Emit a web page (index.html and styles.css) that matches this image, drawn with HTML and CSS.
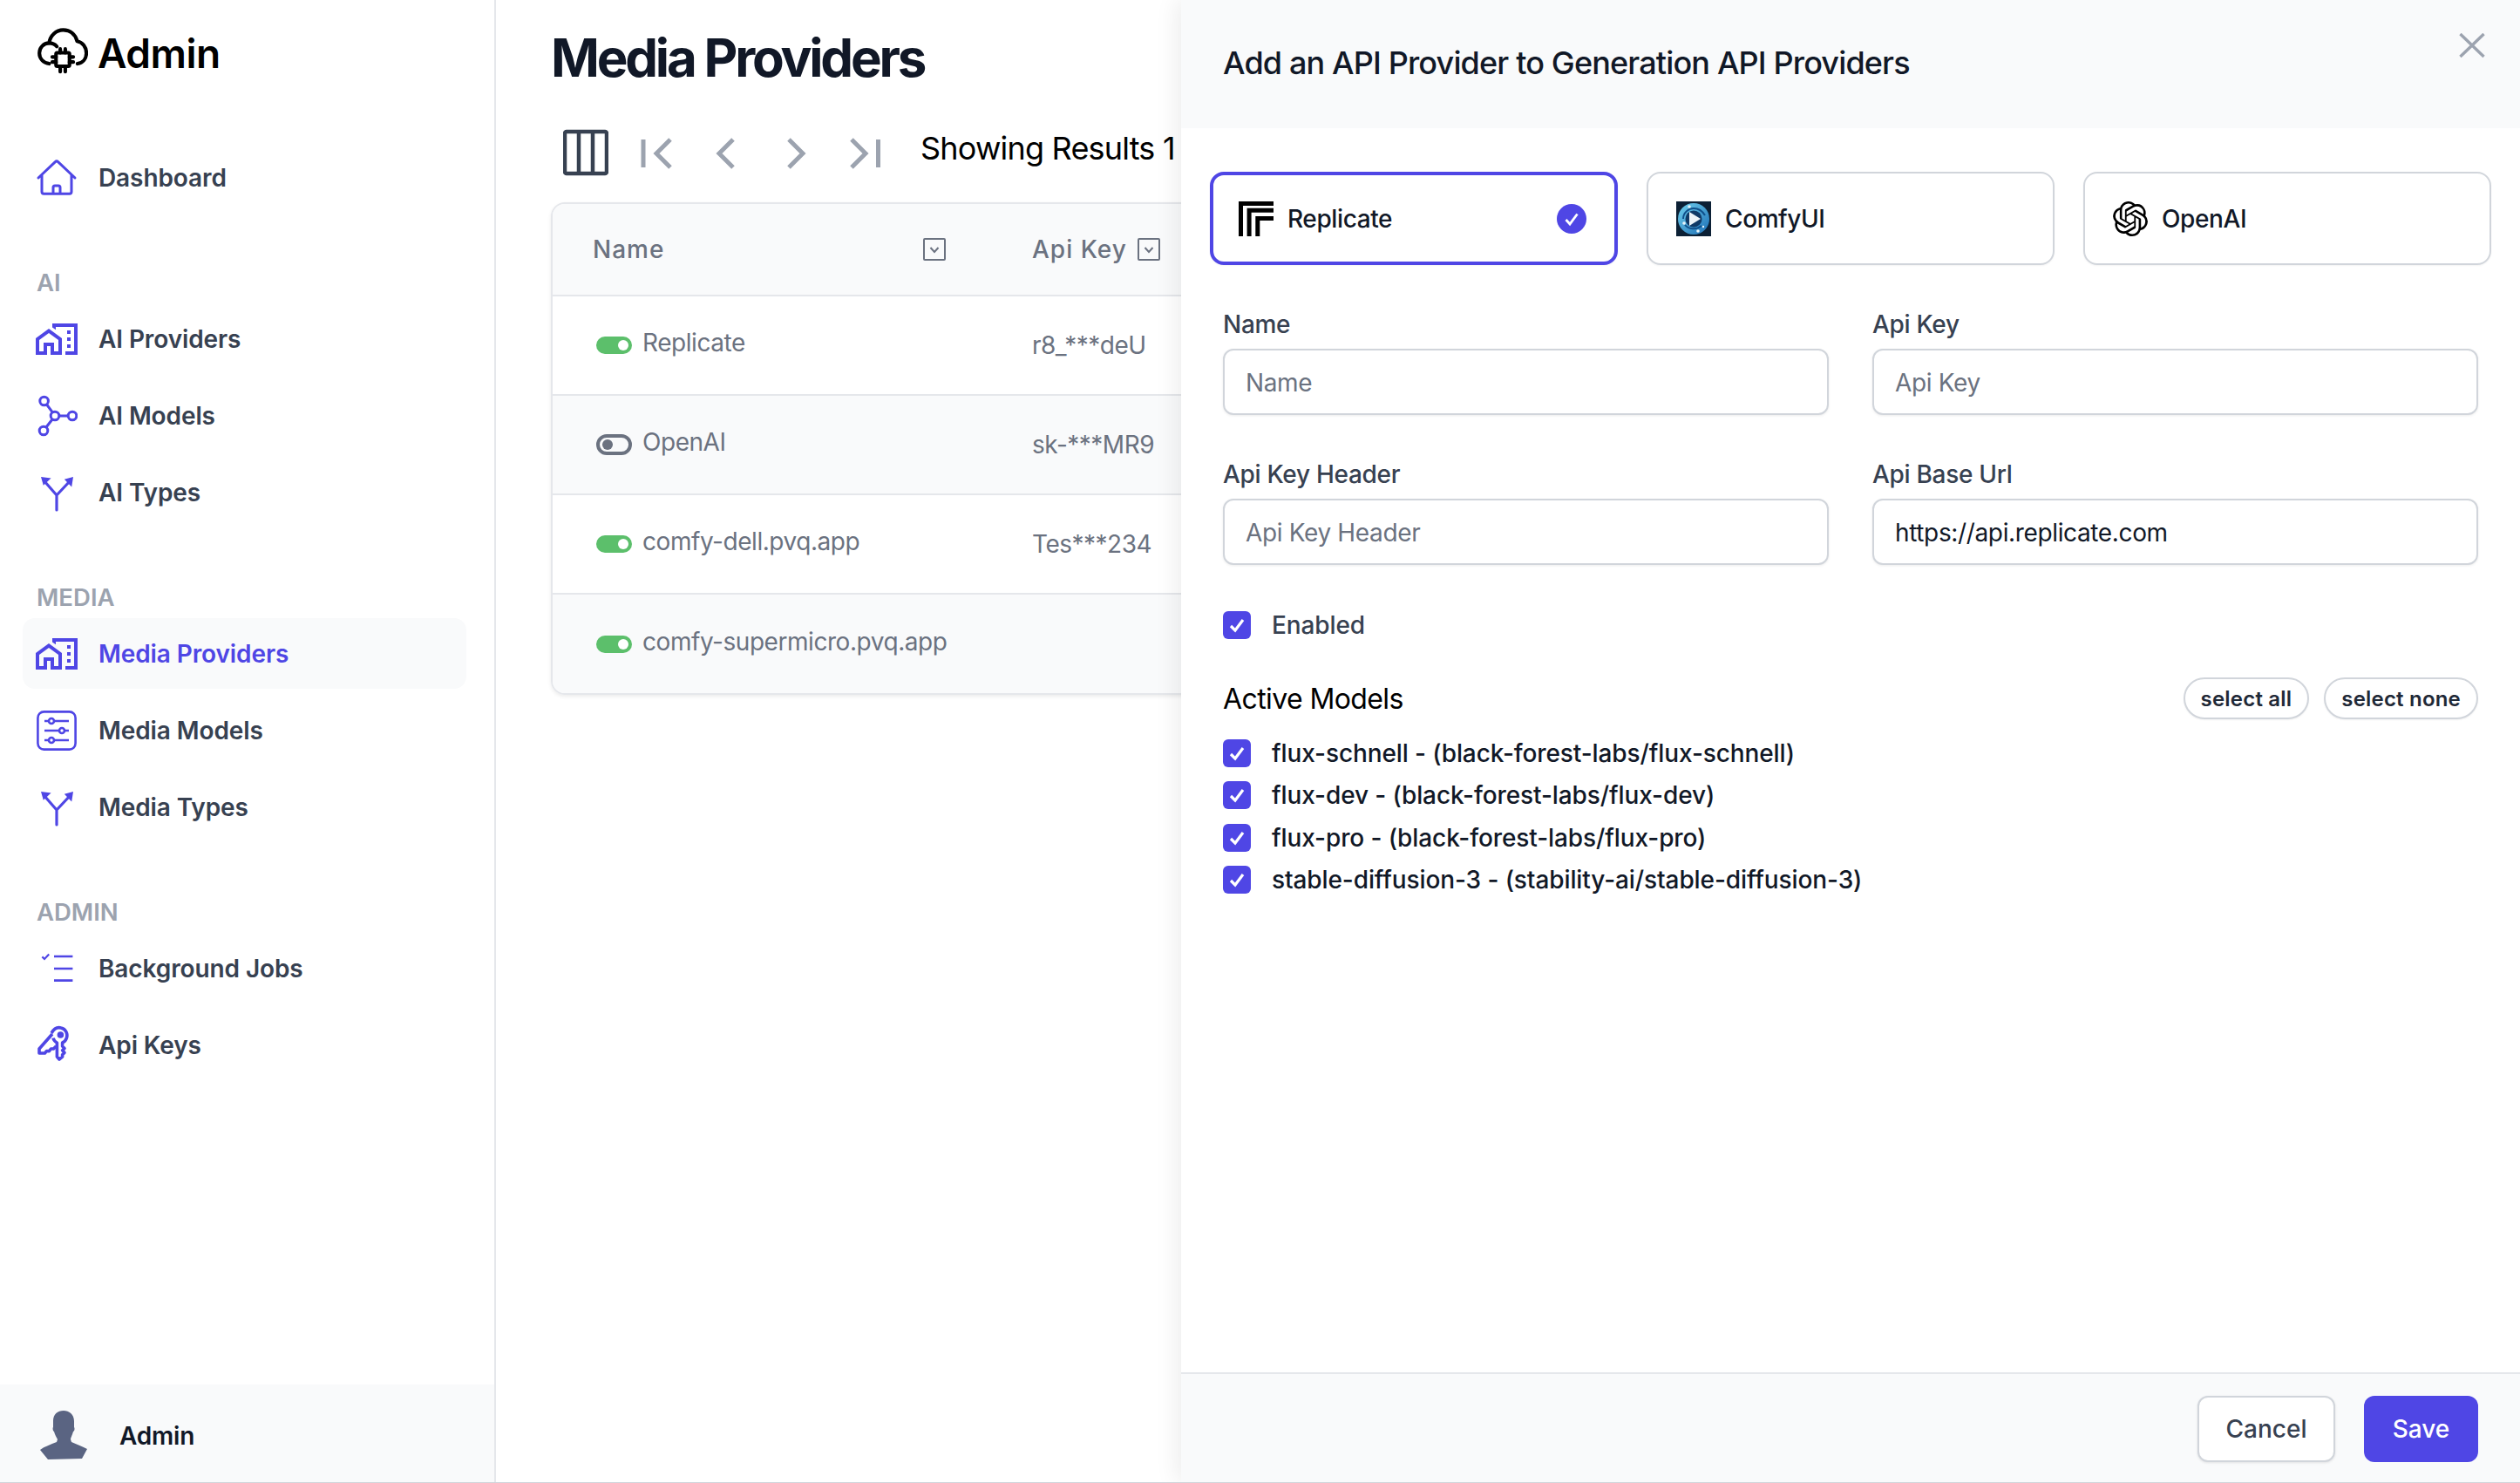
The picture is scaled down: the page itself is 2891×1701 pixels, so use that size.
FILE: index.html
```html
<!DOCTYPE html>
<html lang="en">
<head>
    <meta charset="UTF-8">
    <title>Media Providers</title>
    <link rel="stylesheet" href="styles.css">
</head>
<body>
<div class="app">
    <aside class="sidebar">
        <div class="brand">
            <svg class="brand-logo" viewBox="0 0 24 24" fill="none" stroke="#000" stroke-width="1.7" stroke-linecap="round" stroke-linejoin="round">
                <path d="M5.6 17C2.8 16.6.9 14.6.9 12c0-2.7 2-4.7 4.6-4.8C6 3.6 8.8 1 12.2 1c3.3 0 5.8 2 6.6 5.3 2.7.5 4.4 2.8 4.4 5.7 0 2.6-1.6 4.6-4.2 5"/>
                <path d="M5.5 7.2c1.5 0 2.8.6 3.7 1.6"/>
                <rect x="8.8" y="11.8" width="6.4" height="6.4" rx=".6"/>
                <path d="M10.8 10v1.8M13.2 10v1.8M10.8 18.2v2.6M13.2 18.2v2.6M7 13.8h1.8M7 16.2h1.8M15.2 13.8H17M15.2 16.2H17"/>
            </svg>
            <span class="brand-name">Admin</span>
        </div>

        <nav class="nav">
            <a class="nav-item first">
                <svg class="nav-icon" viewBox="0 0 24 24" fill="none" stroke="currentColor" stroke-width="1.5" stroke-linejoin="round" stroke-linecap="round"><path d="M1.5 12l9.7-9.2c.44-.44 1.16-.44 1.6 0L22.500 12M3.500 10v10c0 .62.5 1.100 1.100 1.100h14.800c.62 0 1.100-.5 1.100-1.100V10M10 21v-3.500c0-.6.4-1 1-1h2c.6 0 1 .4 1 1V21"/></svg>
                Dashboard
            </a>

            <div class="nav-section">
                <div class="nav-label">AI</div>
                <a class="nav-item">
                    <svg class="nav-icon" viewBox="0 0 24 24"><path fill="currentColor" fill-rule="evenodd" d="M9.500 3v2.200l2 1.400V5H22v14h-5v2h7V3H9.500zM18 7h2v2h-2zM18 11h2v2h-2zM18 15h2v2h-2zM0 11.500V21h6.500v-5h2v5H15v-9.500L7.500 6 0 11.500zM13 19h-2.500v-5h-6v5H2v-6.500l5.500-4 5.500 4z"/></svg>
                    AI Providers
                </a>
                <a class="nav-item">
                    <svg class="nav-icon" viewBox="0 0 24 24" fill="none" stroke="currentColor" stroke-width="1.5"><circle cx="4.800" cy="3.500" r="2.400"/><circle cx="11" cy="12" r="2.400"/><circle cx="21" cy="12" r="2.400"/><circle cx="4.500" cy="20.500" r="2.400"/><path d="M6.300 5.500l3.300 4.400M13.500 12h5M9.500 14l-3.500 4.500"/></svg>
                    AI Models
                </a>
                <a class="nav-item">
                    <svg class="nav-icon" viewBox="0 0 24 24" fill="none" stroke="currentColor" stroke-width="1.600" stroke-linecap="round"><path d="M12 22v-8.500L5 5.500M12 13.500l7.500-8"/><path fill="currentColor" stroke="none" d="M3 3l5.800.8-4.400 4.100zM21.500 3l-.9 5.700-4.200-4.300z"/></svg>
                    AI Types
                </a>
            </div>

            <div class="nav-section">
                <div class="nav-label">MEDIA</div>
                <a class="nav-item active">
                    <svg class="nav-icon" viewBox="0 0 24 24"><path fill="currentColor" fill-rule="evenodd" d="M9.500 3v2.200l2 1.400V5H22v14h-5v2h7V3H9.500zM18 7h2v2h-2zM18 11h2v2h-2zM18 15h2v2h-2zM0 11.500V21h6.500v-5h2v5H15v-9.500L7.500 6 0 11.500zM13 19h-2.500v-5h-6v5H2v-6.500l5.500-4 5.500 4z"/></svg>
                    Media Providers
                </a>
                <a class="nav-item">
                    <svg class="nav-icon" viewBox="0 0 24 24" fill="none" stroke="currentColor" stroke-width="1.300"><rect x="1.200" y="1.200" width="21.600" height="21.600" rx="3.500"/><path d="M5 6.500h14M5 12h14M5 17.500h14"/><circle cx="9" cy="6.500" r="1.500" fill="#fff"/><circle cx="15" cy="12" r="1.500" fill="#fff"/><circle cx="9" cy="17.500" r="1.500" fill="#fff"/></svg>
                    Media Models
                </a>
                <a class="nav-item">
                    <svg class="nav-icon" viewBox="0 0 24 24" fill="none" stroke="currentColor" stroke-width="1.600" stroke-linecap="round"><path d="M12 22v-8.500L5 5.500M12 13.500l7.500-8"/><path fill="currentColor" stroke="none" d="M3 3l5.800.8-4.400 4.100zM21.500 3l-.9 5.700-4.200-4.300z"/></svg>
                    Media Types
                </a>
            </div>

            <div class="nav-section">
                <div class="nav-label">ADMIN</div>
                <a class="nav-item">
                    <svg class="nav-icon" viewBox="0 0 24 24" fill="none" stroke="currentColor" stroke-width="1.300"><path d="M10.500 5h10.700M10.500 12h10.700M10.500 18.800h10.700"/><path d="M3.700 5.200l1.300 1.300 2.600-2.700" stroke-width="1.100"/></svg>
                    Background Jobs
                </a>
                <a class="nav-item">
                    <svg class="nav-icon" viewBox="0 0 24 24" fill="none" stroke="currentColor" stroke-width="1.800" stroke-linejoin="round"><path d="M9 5c1.500-2.600 3.700-3.500 5.500-3 2.800.6 4 3.400 3.200 5.800-.4 1.200-1.300 2.200-2.400 2.700v2l1.200 1.200-1.200 1.200 1.200 1.300-1.200 1.200v1.200L13.500 20l-1.300-1.500v-8c-1-.5-1.900-1.500-2.200-2.700"/><path d="M9.500 5.500L2 14v2.500h3.200l1-1.200h1.500l1-1.300h1.500l1.500-1.500"/><circle cx="14.200" cy="6" r="1" fill="currentColor"/></svg>
                    Api Keys
                </a>
            </div>
        </nav>

        <div class="user-bar">
            <svg class="avatar" viewBox="0 0 54 56"><path fill="#5a6482" d="M15 12C15 4 20 0 27 0c6 0 12 4 12 12v7c1 1 .5 5-1 5-1 4-3 7-3 9l1 3c6 3 13 5 18 8l-6 11-39 1-9-11c5-4 12-6 19-9l1-3c-1-2-3-5-4-9-1 0-2-4-1-5z"/></svg>
            <span class="user-name">Admin</span>
        </div>
    </aside>

    <main class="content">
        <h1 class="page-title">Media Providers</h1>

        <div class="toolbar">
            <span class="tool">
                <svg width="52" height="54" viewBox="0 0 52 54" fill="none" stroke="#374151" stroke-width="4.500"><rect x="2" y="3" width="48" height="48" rx="2"/><path d="M18 3v48M34 3v48"/></svg>
            </span>
            <span class="tool">
                <svg width="48" height="48" viewBox="0 0 48 48" fill="none" stroke="#9ca3af" stroke-width="5"><path d="M10 9v32M41 9L25 25l16 16"/></svg>
            </span>
            <span class="tool">
                <svg width="48" height="48" viewBox="0 0 48 48" fill="none" stroke="#9ca3af" stroke-width="5"><path d="M33 9L17 25l16 16"/></svg>
            </span>
            <span class="tool">
                <svg width="48" height="48" viewBox="0 0 48 48" fill="none" stroke="#9ca3af" stroke-width="5"><path d="M17 9l16 16-16 16"/></svg>
            </span>
            <span class="tool">
                <svg width="48" height="48" viewBox="0 0 48 48" fill="none" stroke="#9ca3af" stroke-width="5"><path d="M9 9l16 16-16 16M39.500 9v32"/></svg>
            </span>
            <span class="results">Showing Results 1</span>
        </div>

        <div class="table-wrap">
            <table class="data-table">
                <thead>
                    <tr>
                        <th class="col-name">
                            <div class="th-inner">Name
                                <svg class="filter-icon" viewBox="0 0 26 26" fill="none" stroke="#6b7280" stroke-width="2"><rect x="1" y="1" width="24" height="24" rx="1"/><path d="M8.500 11l4.500 5 4.500-5"/></svg>
                            </div>
                        </th>
                        <th class="col-key">
                            <div class="th-inner">Api Key
                                <svg class="filter-icon" viewBox="0 0 26 26" fill="none" stroke="#6b7280" stroke-width="2"><rect x="1" y="1" width="24" height="24" rx="1"/><path d="M8.500 11l4.500 5 4.500-5"/></svg>
                            </div>
                        </th>
                        <th></th>
                    </tr>
                </thead>
                <tbody>
                    <tr>
                        <td><div class="name-cell"><span class="toggle on"></span><span class="name-text">Replicate</span></div></td>
                        <td>r8_***deU</td>
                        <td></td>
                    </tr>
                    <tr class="alt">
                        <td><div class="name-cell"><span class="toggle off"></span><span class="name-text">OpenAI</span></div></td>
                        <td>sk-***MR9</td>
                        <td></td>
                    </tr>
                    <tr>
                        <td><div class="name-cell"><span class="toggle on"></span><span class="name-text">comfy-dell.pvq.app</span></div></td>
                        <td>Tes***234</td>
                        <td></td>
                    </tr>
                    <tr class="alt">
                        <td><div class="name-cell"><span class="toggle on"></span><span class="name-text">comfy-supermicro.pvq.app</span></div></td>
                        <td></td>
                        <td></td>
                    </tr>
                </tbody>
            </table>
        </div>
    </main>

    <section class="panel">
        <header class="panel-head">
            <h2 class="panel-title">Add an API Provider to Generation API Providers</h2>
            <svg class="panel-close" viewBox="0 0 30 30" fill="none" stroke="#9ca3af" stroke-width="3.500"><path d="M1 1l28 27M29 1L1 28"/></svg>
        </header>

        <div class="panel-body">
            <div class="cards">
                <div class="card selected">
                    <svg class="card-icon" viewBox="0 0 40 40"><path d="M0 0h40v5H5v35H0zM9.600 7.700H40v5H14.600V40h-5zM19.300 17H40v5H24.300v18h-5z"/></svg>
                    <span class="card-name">Replicate</span>
                    <svg class="card-check" viewBox="0 0 34 34"><circle cx="17" cy="17" r="17" fill="#4f46e5"/><path d="M10.500 18l4.500 5 8.500-11.500" fill="none" stroke="#fff" stroke-width="2.800"/></svg>
                </div>
                <div class="card">
                    <svg class="card-icon" viewBox="0 0 40 40">
                        <defs><linearGradient id="comfy" x1="0" y1="0" x2="1" y2="1"><stop offset="0" stop-color="#6fd0ee"/><stop offset="1" stop-color="#1d6fb5"/></linearGradient></defs>
                        <rect width="40" height="40" fill="#0c2035"/>
                        <circle cx="20" cy="20" r="18" fill="url(#comfy)"/>
                        <path d="M8 20c0-7 6-12 12-12s10 3 13 8M10 27c4 5 13 6 19 1" fill="none" stroke="#0f4f8a" stroke-width="2"/>
                        <circle cx="20" cy="20" r="9.500" fill="#103a66"/>
                        <path d="M15 12l13 8-13 8z" fill="#eef4f8"/>
                        <circle cx="15" cy="6" r="1.800" fill="#e8f4fa"/><circle cx="9" cy="25" r="1.800" fill="#e8f4fa"/><circle cx="25" cy="34" r="1.800" fill="#e8f4fa"/><circle cx="31" cy="29" r="1.200" fill="#e8f4fa"/>
                    </svg>
                    <span class="card-name">ComfyUI</span>
                </div>
                <div class="card">
                    <svg class="card-icon" viewBox="0 0 24 24"><path d="M22.2819 9.8211a5.9847 5.9847 0 0 0-.5157-4.9108 6.0462 6.0462 0 0 0-6.5098-2.9A6.0651 6.0651 0 0 0 4.9807 4.1818a5.9847 5.9847 0 0 0-3.9977 2.9 6.0462 6.0462 0 0 0 .7427 7.0966 5.98 5.98 0 0 0 .511 4.9107 6.051 6.051 0 0 0 6.5146 2.9001A5.9847 5.9847 0 0 0 13.2599 24a6.0557 6.0557 0 0 0 5.7718-4.2058 5.9894 5.9894 0 0 0 3.9977-2.9001 6.0557 6.0557 0 0 0-.7475-7.0729zm-9.022 12.6081a4.4755 4.4755 0 0 1-2.8764-1.0408l.1419-.0804 4.7783-2.7582a.7948.7948 0 0 0 .3927-.6813v-6.7369l2.02 1.1686a.071.071 0 0 1 .038.052v5.5826a4.504 4.504 0 0 1-4.4945 4.4944zm-9.6607-4.1254a4.4708 4.4708 0 0 1-.5346-3.0137l.142.0852 4.783 2.7582a.7712.7712 0 0 0 .7806 0l5.8428-3.3685v2.3324a.0804.0804 0 0 1-.0332.0615L9.74 19.9502a4.4992 4.4992 0 0 1-6.1408-1.6464zM2.3408 7.8956a4.485 4.485 0 0 1 2.3655-1.9728V11.6a.7664.7664 0 0 0 .3879.6765l5.8144 3.3543-2.0201 1.1685a.0757.0757 0 0 1-.071 0l-4.8303-2.7865A4.504 4.504 0 0 1 2.3408 7.872zm16.5963 3.8558L13.1038 8.364 15.1192 7.2a.0757.0757 0 0 1 .071 0l4.8303 2.7913a4.4944 4.4944 0 0 1-.6765 8.1042v-5.6772a.79.79 0 0 0-.407-.667zm2.0107-3.0231l-.142-.0852-4.7735-2.7818a.7759.7759 0 0 0-.7854 0L9.409 9.2297V6.8974a.0662.0662 0 0 1 .0284-.0615l4.8303-2.7866a4.4992 4.4992 0 0 1 6.6802 4.66zM8.3065 12.863l-2.02-1.1638a.0804.0804 0 0 1-.038-.0567V6.0742a4.4992 4.4992 0 0 1 7.3757-3.4537l-.142.0805L8.704 5.459a.7948.7948 0 0 0-.3927.6813zm1.0976-2.3654l2.602-1.4998 2.6069 1.4998v2.9994l-2.5974 1.4997-2.6067-1.4997Z"/></svg>
                    <span class="card-name">OpenAI</span>
                </div>
            </div>

            <div class="form-grid">
                <div class="field">
                    <label class="field-label" for="name">Name</label>
                    <input class="field-input" id="name" type="text" placeholder="Name">
                </div>
                <div class="field">
                    <label class="field-label" for="apikey">Api Key</label>
                    <input class="field-input" id="apikey" type="text" placeholder="Api Key">
                </div>
                <div class="field">
                    <label class="field-label" for="keyheader">Api Key Header</label>
                    <input class="field-input" id="keyheader" type="text" placeholder="Api Key Header">
                </div>
                <div class="field">
                    <label class="field-label" for="baseurl">Api Base Url</label>
                    <input class="field-input" id="baseurl" type="text" value="https://api.replicate.com">
                </div>
            </div>

            <div class="check-row enabled">
                <svg class="checkbox" viewBox="0 0 32 32"><rect width="32" height="32" rx="6" fill="#4f46e5"/><path d="M9 17l5 5 9-12" fill="none" stroke="#fff" stroke-width="3.200"/></svg>
                Enabled
            </div>

            <div class="models-head">
                <h3 class="models-title">Active Models</h3>
                <div class="pill-group">
                    <button class="pill" type="button">select all</button>
                    <button class="pill" type="button">select none</button>
                </div>
            </div>

            <div class="models">
                <div class="check-row model">
                    <svg class="checkbox" viewBox="0 0 32 32"><rect width="32" height="32" rx="6" fill="#4f46e5"/><path d="M9 17l5 5 9-12" fill="none" stroke="#fff" stroke-width="3.200"/></svg>
                    flux-schnell - (black-forest-labs/flux-schnell)
                </div>
                <div class="check-row model">
                    <svg class="checkbox" viewBox="0 0 32 32"><rect width="32" height="32" rx="6" fill="#4f46e5"/><path d="M9 17l5 5 9-12" fill="none" stroke="#fff" stroke-width="3.200"/></svg>
                    flux-dev - (black-forest-labs/flux-dev)
                </div>
                <div class="check-row model">
                    <svg class="checkbox" viewBox="0 0 32 32"><rect width="32" height="32" rx="6" fill="#4f46e5"/><path d="M9 17l5 5 9-12" fill="none" stroke="#fff" stroke-width="3.200"/></svg>
                    flux-pro - (black-forest-labs/flux-pro)
                </div>
                <div class="check-row model">
                    <svg class="checkbox" viewBox="0 0 32 32"><rect width="32" height="32" rx="6" fill="#4f46e5"/><path d="M9 17l5 5 9-12" fill="none" stroke="#fff" stroke-width="3.200"/></svg>
                    stable-diffusion-3 - (stability-ai/stable-diffusion-3)
                </div>
            </div>
        </div>

        <footer class="panel-foot">
            <button class="btn btn-cancel" type="button">Cancel</button>
            <button class="btn btn-save" type="button">Save</button>
        </footer>
    </section>
</div>
</body>
</html>
```

FILE: styles.css
```css
* {
    box-sizing: border-box;
}

html, body {
    margin: 0;
    padding: 0;
}

body {
    font-family: Inter, "Noto Sans", sans-serif;
    color: #111827;
    background: #fff;
    overflow: hidden;
}

.app {
    position: relative;
    display: flex;
    width: 2891px;
    height: 1701px;
    border-bottom: 1px solid #d1d5db;
    overflow: hidden;
}

/* sidebar */
.sidebar {
    flex: none;
    width: 569px;
    display: flex;
    flex-direction: column;
    border-right: 2px solid #e5e7eb;
}

.brand {
    height: 122px;
    padding-left: 43px;
    display: flex;
    align-items: center;
    gap: 11px;
}

.brand-logo {
    width: 58px;
    height: 58px;
}

.brand-name {
    font-size: 46px;
    font-weight: 600;
    color: #000;
    letter-spacing: -0.5px;
}

.nav {
    padding: 41px 32px 0 26px;
}

.nav-section {
    padding-top: 60px;
}

.nav-label {
    height: 40px;
    line-height: 40px;
    margin: 0 0 4px 16px;
    font-size: 27.5px;
    font-weight: 600;
    color: #9ca3af;
}

.nav-item {
    height: 81px;
    margin-bottom: 7px;
    padding-left: 15px;
    display: flex;
    align-items: center;
    gap: 24px;
    border-radius: 14px;
    font-size: 28px;
    font-weight: 600;
    color: #374151;
    letter-spacing: -0.1px;
}

.nav-item.first,
.nav-section .nav-item:last-child {
    margin-bottom: 0;
}

.nav-item.active {
    background: #f9fafb;
    color: #4f46e5;
}

.nav-icon {
    flex: none;
    width: 48px;
    height: 48px;
    color: #4f46e5;
}

.user-bar {
    margin-top: auto;
    height: 112px;
    padding: 3px 0 0 46px;
    display: flex;
    align-items: center;
    gap: 37px;
    background: #f9fafb;
}

.avatar {
    width: 54px;
    height: 56px;
}

.user-name {
    margin-top: 2px;
    font-size: 28px;
    font-weight: 600;
    letter-spacing: -0.2px;
}

/* main column */
.content {
    flex: 1;
    min-width: 0;
    padding-left: 63px;
    overflow: hidden;
}

.page-title {
    margin: 0;
    height: 132px;
    line-height: 132px;
    font-size: 60px;
    font-weight: 700;
    letter-spacing: -3.2px;
}

.toolbar {
    height: 86px;
    margin-bottom: 14px;
    display: flex;
    align-items: center;
}

.tool {
    flex: none;
    width: 80px;
    display: flex;
    justify-content: center;
}

.results {
    margin: 0 0 10px 24px;
    font-size: 36px;
    font-weight: 400;
    letter-spacing: -0.8px;
    color: #000;
    white-space: nowrap;
}

.table-wrap {
    width: 1500px;
    border: 2px solid #e5e7eb;
    border-radius: 16px;
    box-shadow: 0 2px 4px rgba(0, 0, 0, .08);
    overflow: hidden;
}

.data-table {
    width: 100%;
    border-collapse: collapse;
    table-layout: fixed;
    font-size: 28px;
    color: #6b7280;
}

.data-table th {
    height: 105px;
    padding: 0 0 0 46px;
    background: #f9fafb;
    text-align: left;
    font-weight: 500;
    letter-spacing: 1px;
    border-bottom: 2px solid #e5e7eb;
}

.col-name {
    width: 504px;
}

.col-key {
    width: 193px;
}

.th-inner {
    display: flex;
    align-items: center;
    justify-content: space-between;
    padding-right: 53px;
}

.col-key .th-inner {
    padding-right: 0;
}

.filter-icon {
    width: 26px;
    height: 26px;
}

.data-table td {
    height: 114px;
    padding: 0 0 0 46px;
    white-space: nowrap;
    border-top: 2px solid #e5e7eb;
    letter-spacing: -0.5px;
}

.data-table tbody tr:first-child td {
    border-top: 0;
}

.data-table tr.alt td {
    background: #f9fafb;
}

.name-cell {
    display: flex;
    align-items: center;
    padding-left: 4px;
}

.name-text {
    margin: 0 0 6px 12px;
    letter-spacing: -0.45px;
}

.toggle {
    position: relative;
    flex: none;
    width: 41px;
    height: 20px;
    border-radius: 10px;
}

.toggle.on {
    background: #5cbf6b;
}

.toggle.on::after {
    content: "";
    position: absolute;
    right: 4px;
    top: 4px;
    width: 12px;
    height: 12px;
    border-radius: 50%;
    background: #fff;
}

.toggle.off {
    height: 24px;
    border: 4px solid #6b7280;
    border-radius: 12px;
}

.toggle.off::after {
    content: "";
    position: absolute;
    left: 3px;
    top: 2px;
    width: 12px;
    height: 12px;
    border-radius: 50%;
    background: #6b7280;
}

/* slide-over */
.panel {
    position: absolute;
    top: 0;
    right: 0;
    bottom: 0;
    width: 1536px;
    display: flex;
    flex-direction: column;
    background: #fff;
    box-shadow: -6px 0 24px rgba(0, 0, 0, .07);
}

.panel-head {
    position: relative;
    flex: none;
    height: 147px;
    padding-left: 48px;
    display: flex;
    align-items: center;
    background: #f9fafb;
}

.panel-title {
    margin: 0 0 4px;
    font-size: 36px;
    font-weight: 500;
    letter-spacing: -0.85px;
}

.panel-close {
    position: absolute;
    top: 38px;
    right: 40px;
    width: 30px;
    height: 29px;
}

.panel-body {
    flex: 1;
    padding: 50px 48px 0;
}

.cards {
    display: grid;
    grid-template-columns: repeat(3, 1fr);
    gap: 33px;
    margin: 0 -15px;
}

.card {
    height: 107px;
    padding-left: 32px;
    display: flex;
    align-items: center;
    border: 2px solid #d1d5db;
    border-radius: 16px;
    box-shadow: 0 1px 2px rgba(0, 0, 0, .05);
}

.card.selected {
    border: 4px solid #4f46e5;
    padding-left: 29px;
}

.card-icon {
    flex: none;
    width: 40px;
    height: 40px;
}

.card-name {
    margin-left: 16px;
    font-size: 28px;
    font-weight: 500;
    letter-spacing: -0.4px;
}

.card-check {
    width: 34px;
    height: 34px;
    margin-left: auto;
    margin-right: 32px;
}

.form-grid {
    display: grid;
    grid-template-columns: 1fr 1fr;
    column-gap: 50px;
    row-gap: 50px;
    margin-top: 50px;
}

.field-label {
    display: block;
    height: 36px;
    line-height: 36px;
    margin-bottom: 10px;
    font-size: 28px;
    font-weight: 500;
    letter-spacing: -0.3px;
    color: #374151;
}

.field-input {
    display: block;
    width: 100%;
    height: 76px;
    padding: 2px 24px 0;
    border: 2px solid #d1d5db;
    border-radius: 12px;
    font-family: inherit;
    font-size: 28px;
    letter-spacing: -0.36px;
    color: #111827;
    box-shadow: 0 1px 3px rgba(0, 0, 0, .08);
    outline: none;
}

.field-input::placeholder {
    color: #6b7280;
    opacity: 1;
}

.check-row {
    display: flex;
    align-items: center;
    gap: 24px;
    font-size: 28px;
    font-weight: 500;
    letter-spacing: -0.1px;
}

.checkbox {
    flex: none;
    width: 32px;
    height: 32px;
}

.enabled {
    margin-top: 50px;
    height: 38px;
    color: #374151;
}

.models-head {
    margin-top: 41px;
    height: 48px;
    display: flex;
    align-items: center;
    justify-content: space-between;
}

.models-title {
    margin: 0;
    font-size: 32px;
    font-weight: 400;
    letter-spacing: -0.6px;
    color: #000;
}

.pill-group {
    display: flex;
    gap: 17px;
}

.pill {
    height: 48px;
    padding: 0 18px;
    background: #fff;
    border: 2px solid #d1d5db;
    border-radius: 24px;
    font-family: inherit;
    font-size: 24px;
    font-weight: 600;
    letter-spacing: .2px;
    color: #1f2937;
    box-shadow: 0 1px 2px rgba(0, 0, 0, .05);
}

.models {
    margin-top: 15px;
}

.model {
    height: 48.3px;
}

.panel-foot {
    flex: none;
    height: 126px;
    padding: 25px 48px 0 0;
    display: flex;
    justify-content: flex-end;
    align-items: flex-start;
    gap: 33px;
    background: #f9fafb;
    border-top: 2px solid #e5e7eb;
}

.btn {
    height: 76px;
    border-radius: 12px;
    font-family: inherit;
    font-size: 28px;
    font-weight: 500;
}

.btn-cancel {
    width: 158px;
    background: #fff;
    color: #374151;
    border: 2px solid #d1d5db;
    box-shadow: 0 1px 3px rgba(0, 0, 0, .1);
}

.btn-save {
    width: 131px;
    background: #4f46e5;
    color: #fff;
    border: 0;
}
```
